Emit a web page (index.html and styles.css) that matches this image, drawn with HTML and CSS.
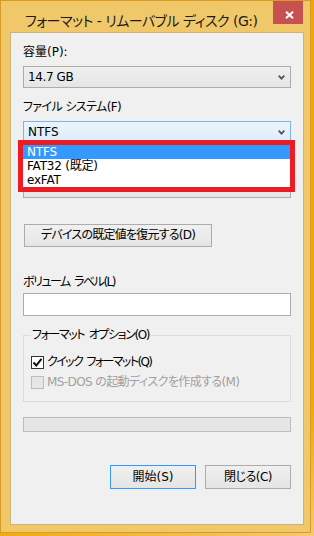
FILE: index.html
```html
<!DOCTYPE html>
<html lang="ja">
<head>
<meta charset="utf-8">
<title>フォーマット</title>
<link rel="stylesheet" href="styles.css">
</head>
<body>
<div class="window">
  <div class="titlebar">
    <div class="title">フォーマット - リムーバブル ディスク (G:)</div>
    <div class="close"><svg width="9" height="8" viewBox="0 0 9 8"><path d="M1 0.8 L8 7.2 M8 0.8 L1 7.2" stroke="#fff" stroke-width="2" fill="none"/></svg></div>
  </div>
  <div class="panel">
    <div class="label first">容量(P):</div>
    <div class="combo"><span class="val">14.7 GB</span><svg class="chev" width="7" height="5" viewBox="0 0 7 5"><path d="M0.7 0.7 L3.5 3.6 L6.3 0.7" stroke="#555" stroke-width="1.8" fill="none"/></svg></div>
    <div class="label fs">ファイル システム(F)</div>
    <div class="combo-wrap">
      <div class="combo focused"><span>NTFS</span><svg class="chev" width="7" height="5" viewBox="0 0 7 5"><path d="M0.7 0.7 L3.5 3.6 L6.3 0.7" stroke="#555" stroke-width="1.8" fill="none"/></svg></div>
      <div class="dropdown">
        <div class="opt sel">NTFS</div>
        <div class="opt">FAT32 (既定)</div>
        <div class="opt">exFAT</div>
      </div>
    </div>
    <div class="combo hidden-combo"></div>
    <button class="btn restore">デバイスの既定値を復元する(D)</button>
    <div class="label vol">ボリューム ラベル(L)</div>
    <div class="textbox"></div>
    <fieldset class="group">
      <legend>フォーマット オプション(O)</legend>
      <div class="check quick"><span class="box on"><svg width="11" height="11" viewBox="0 0 11 11"><path d="M1.5 5.5 L4.3 8.5 L9.5 1.8" stroke="#111" stroke-width="2" fill="none"/></svg></span><span>クイック フォーマット(Q)</span></div>
      <div class="check disabled"><span class="box"></span><span>MS-DOS の起動ディスクを作成する(M)</span></div>
    </fieldset>
    <div class="progress"></div>
    <div class="actions">
      <button class="btn default">開始(S)</button>
      <button class="btn closebtn">閉じる(C)</button>
    </div>
  </div>
</div>
</body>
</html>
```
FILE: styles.css
```css
html, body {
  margin: 0;
  padding: 0;
}
body {
  width: 314px;
  height: 536px;
  overflow: hidden;
  background: linear-gradient(160deg, #f2a400 0%, #f3a700 80%, #f6c870 100%);
  font-family: "DejaVu Sans", "Noto Sans CJK JP", sans-serif;
  font-size: 12px;
  font-feature-settings: "palt";
  color: #000;
}
.window {
  position: relative;
  box-sizing: border-box;
  width: 311px;
  height: 533px;
  border: 1px solid #d99b26;
  background: #f0c86a;
  padding: 0 6px 7px 9px;
}
.titlebar {
  display: flex;
  justify-content: space-between;
  align-items: flex-start;
  height: 31px;
}
.title {
  padding: 10px 0 0 15px;
  font-size: 14px;
  letter-spacing: -0.5px;
  line-height: 20px;
  color: #1b1b1b;
  white-space: nowrap;
  overflow: hidden;
}
.close {
  flex: none;
  box-sizing: border-box;
  width: 30px;
  height: 23px;
  margin-right: 1px;
  background: #c75050;
  padding: 10px 0 0 12px;
  line-height: 0;
}
.panel {
  box-sizing: border-box;
  width: 294px;
  height: 493px;
  border: 1px solid #c9b47e;
  background: #f0f0f0;
  padding: 12px 12px 0 12px;
}
.label {
  line-height: 15px;
  height: 15px;
  margin-top: 12px;
  white-space: nowrap;
}
.label.first { margin-top: 0; }
.label.fs { letter-spacing: -0.6px; }
.label.vol { margin-top: 28px; letter-spacing: -1.5px; word-spacing: 2px; }
.combo {
  box-sizing: border-box;
  height: 22px;
  margin-top: 6px;
  border: 1px solid #acacac;
  background: linear-gradient(#f0f0f0, #e5e5e5);
  display: flex;
  align-items: center;
  justify-content: space-between;
  padding: 0 5px 0 4px;
  line-height: 15px;
}
.combo .val { letter-spacing: -0.4px; }
.combo.focused {
  border-color: #7eb4ea;
  background: linear-gradient(#ecf4fc, #dcecfc);
}
.chev { margin-top: 1px; }
.combo-wrap {
  position: relative;
}
.hidden-combo { margin-top: 33px; }
.dropdown {
  position: absolute;
  top: 19px;
  left: -5px;
  width: 277px;
  box-sizing: border-box;
  border: 5px solid #ec1c24;
  background: #fff;
  z-index: 2;
}
.opt {
  height: 14px;
  line-height: 14px;
  padding-left: 4px;
  white-space: nowrap;
  letter-spacing: -0.2px;
}
.opt.sel {
  background: #3399ff;
  color: #fff;
}
.btn {
  box-sizing: border-box;
  display: flex;
  align-items: center;
  justify-content: center;
  border: 1px solid #acacac;
  background: linear-gradient(#f0f0f0, #e5e5e5);
  font: inherit;
  font-size: 12px;
  line-height: 15px;
  color: #000;
  padding: 0;
  margin: 0;
}
.restore {
  width: 188px;
  height: 23px;
  margin: 26px 0 0 1px;
  letter-spacing: -0.75px;
}
.textbox {
  box-sizing: border-box;
  height: 23px;
  margin-top: 3px;
  background: #fff;
  border: 1px solid #acacac;
}
.group {
  margin: 12px 0 0 0;
  padding: 10px 0 9px 7px;
  border: 1px solid #dcdcdc;
  min-width: 0;
}
.group legend {
  padding: 0 1px;
  line-height: 14px;
  white-space: nowrap;
  letter-spacing: -1.4px;
  word-spacing: 2px;
}
.check {
  display: flex;
  align-items: center;
  height: 20px;
  gap: 3px;
  white-space: nowrap;
  line-height: 15px;
  letter-spacing: -0.6px;
}
.check.quick { letter-spacing: -1.6px; word-spacing: 2px; }
.box {
  box-sizing: border-box;
  width: 13px;
  height: 13px;
  border: 1px solid #333;
  background: #fff;
  line-height: 0;
  flex: none;
}
.check.disabled { color: #a0a0a0; }
.check.disabled .box {
  border-color: #bcbcbc;
  background: #e6e6e6;
}
.progress {
  box-sizing: border-box;
  height: 15px;
  margin-top: 15px;
  border: 1px solid #bcbcbc;
  background: #e6e6e6;
}
.actions {
  display: flex;
  justify-content: flex-end;
  gap: 9px;
  margin-top: 33px;
}
.actions .btn {
  width: 86px;
  height: 24px;
}
.btn.closebtn { letter-spacing: -0.5px; }
.btn.default { border-color: #3399ff; }
```
